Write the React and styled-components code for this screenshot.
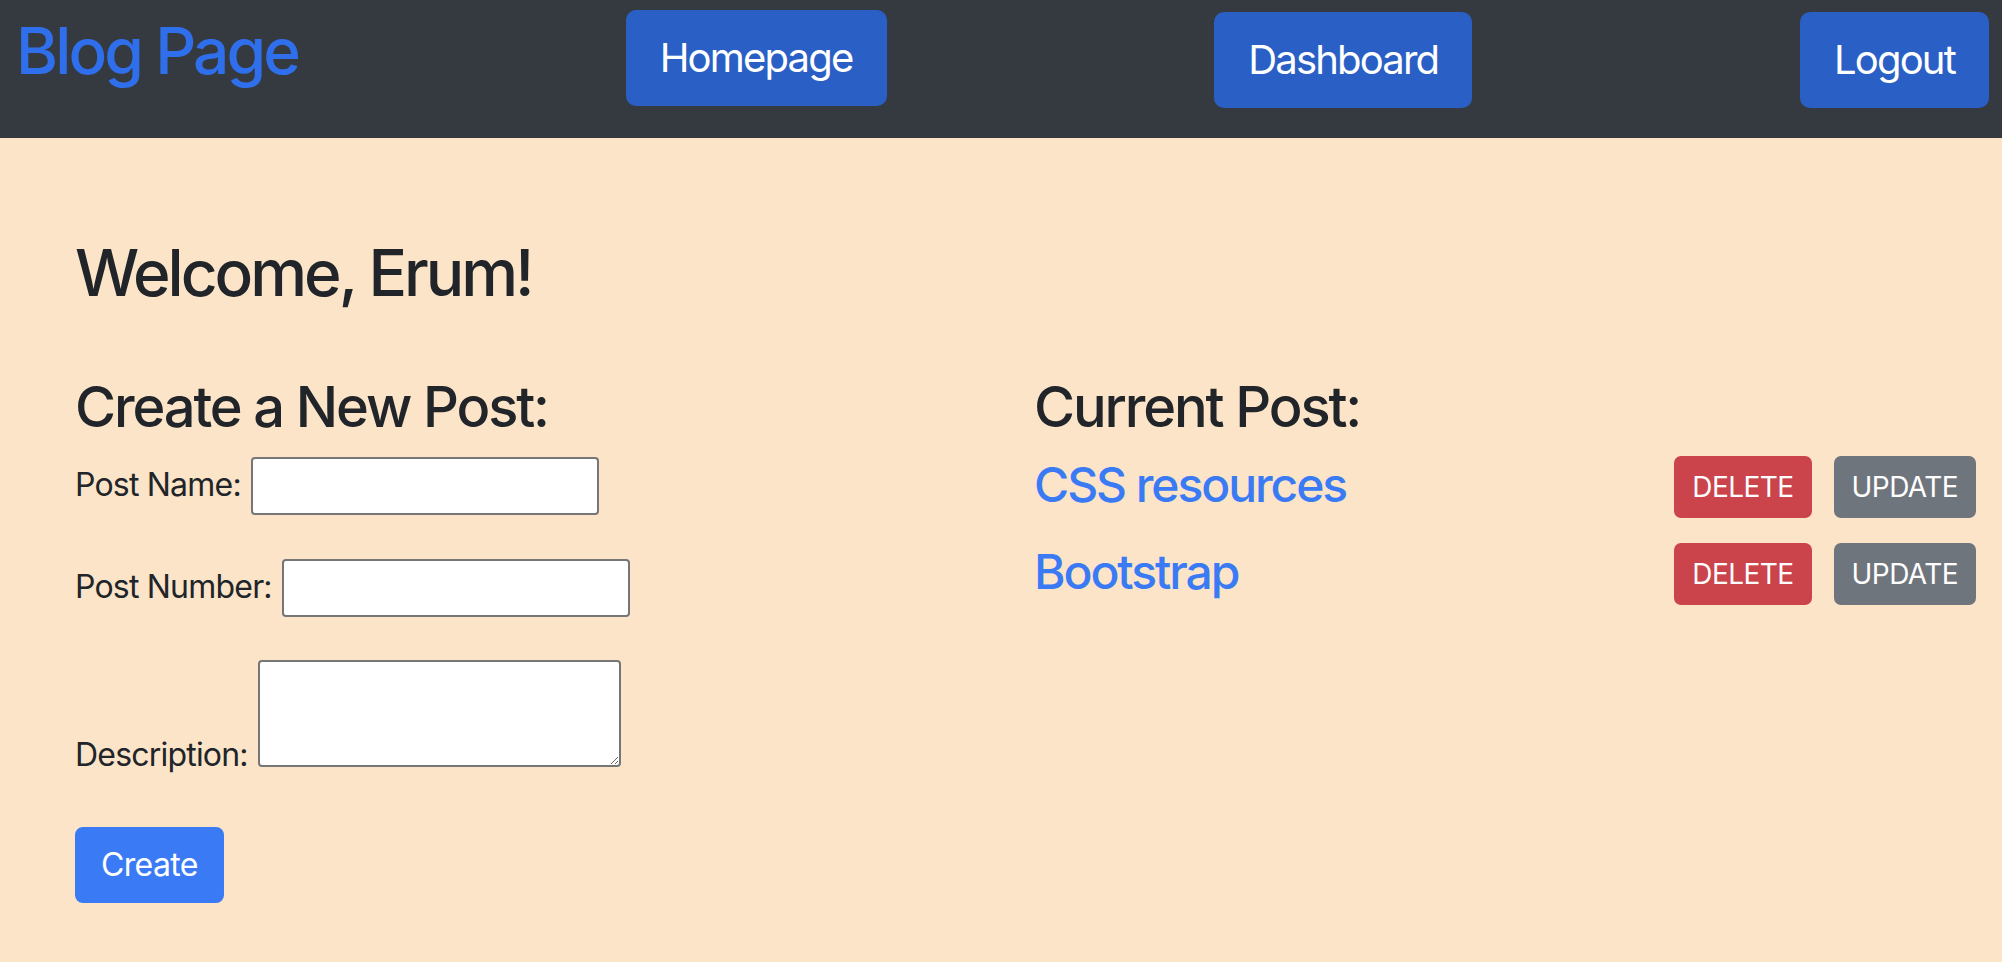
import React from "react";
import styled, { createGlobalStyle } from "styled-components";

const GlobalStyle = createGlobalStyle`
  html, body {
    margin: 0;
    padding: 0;
  }
  body {
    font-family: Inter, "Noto Sans", sans-serif;
    background: #fbe4c8;
    color: #212529;
  }
`;

const Page = styled.div`
  min-height: 100vh;
  background: #fbe4c8;
`;

// Top bar
const Navbar = styled.nav`
  display: flex;
  justify-content: space-between;
  align-items: flex-start;
  height: 138px;
  box-sizing: border-box;
  padding: 0 13px 0 16px;
  background: #353a40;
`;

const Brand = styled.a`
  margin-top: 13px;
  font-size: 64px;
  font-weight: 450;
  line-height: 1.2;
  letter-spacing: -0.045em;
  color: #2f6fec;
  text-decoration: none;
`;

const NavButton = styled.button`
  margin-top: ${(p) => p.$top}px;
  padding: 16px 32px;
  font-family: inherit;
  font-size: 40px;
  line-height: 60px;
  letter-spacing: -0.045em;
  color: #fff;
  background: #2a60c5;
  border: 2px solid #2a60c5;
  border-radius: 10px;
  cursor: pointer;
`;

// Content
const Main = styled.main`
  padding: 97px 26px 0 75px;
`;

const Welcome = styled.h2`
  margin: 0;
  font-size: 64px;
  font-weight: 500;
  line-height: 1.2;
  letter-spacing: -0.047em;
`;

const Columns = styled.div`
  display: grid;
  grid-template-columns: 959px 1fr;
  margin-top: 62px;
`;

const SectionTitle = styled.h3`
  margin: 0;
  font-size: 56px;
  font-weight: 500;
  line-height: 1.2;
  letter-spacing: -0.038em;
`;

const Form = styled.form`
  display: flex;
  flex-direction: column;
  align-items: flex-start;
`;

const Field = styled.div`
  display: flex;
  align-items: flex-end;
  gap: 10px;
  margin-top: ${(p) => p.$gap}px;
`;

const Label = styled.label`
  font-size: 32px;
  line-height: 48px;
  letter-spacing: -0.025em;
  margin-bottom: ${(p) => p.$baseline - 12}px;
`;

const TextInput = styled.input`
  width: 348px;
  height: 58px;
  box-sizing: border-box;
  padding: 2px 4px;
  font-size: 26px;
  background: #fff;
  border: 2px solid #767676;
  border-radius: 4px;
  outline: none;
`;

const TextArea = styled.textarea`
  width: 363px;
  height: 107px;
  box-sizing: border-box;
  padding: 2px 4px;
  font-size: 26px;
  background: #fff;
  border: 2px solid #767676;
  border-radius: 4px;
  outline: none;
`;

const CreateButton = styled.button`
  margin-top: 60px;
  padding: 12px 24px;
  font-family: inherit;
  font-size: 32px;
  line-height: 48px;
  letter-spacing: -0.02em;
  color: #fff;
  background: #3a7bf5;
  border: 2px solid #3a7bf5;
  border-radius: 8px;
  cursor: pointer;
`;

const PostList = styled.div`
  display: flex;
  flex-direction: column;
  gap: 25px;
  margin-top: 15px;
`;

const PostRow = styled.div`
  display: flex;
  justify-content: space-between;
  align-items: flex-start;
`;

const PostLink = styled.a`
  font-size: 48px;
  font-weight: 500;
  line-height: 1.2;
  letter-spacing: -0.043em;
  color: #3a7bf5;
  text-decoration: none;
`;

const Actions = styled.div`
  display: flex;
  gap: 22px;
`;

const SmallButton = styled.button`
  padding: 8px 16px;
  font-family: inherit;
  font-size: 28px;
  line-height: 42px;
  letter-spacing: -0.02em;
  text-transform: uppercase;
  color: #fff;
  background: ${(p) => (p.$variant === "danger" ? "#cb444c" : "#6f757d")};
  border: 2px solid ${(p) => (p.$variant === "danger" ? "#cb444c" : "#6f757d")};
  border-radius: 7px;
  cursor: pointer;
`;

const posts = [
  { id: 1, name: "CSS resources" },
  { id: 2, name: "Bootstrap" },
];

export default function App() {
  return (
    <Page>
      <GlobalStyle />
      <Navbar>
        <Brand href="#">Blog Page</Brand>
        <NavButton $top={10}>Homepage</NavButton>
        <NavButton $top={12}>Dashboard</NavButton>
        <NavButton $top={12}>Logout</NavButton>
      </Navbar>

      <Main>
        <Welcome>Welcome, Erum!</Welcome>
        <Columns>
          <div>
            <SectionTitle>Create a New Post:</SectionTitle>
            <Form onSubmit={(e) => e.preventDefault()}>
              <Field $gap={16}>
                <Label $baseline={18}>Post Name:</Label>
                <TextInput type="text" />
              </Field>
              <Field $gap={44}>
                <Label $baseline={18}>Post Number:</Label>
                <TextInput type="text" />
              </Field>
              <Field $gap={43}>
                <Label $baseline={0}>Description:</Label>
                <TextArea />
              </Field>
              <CreateButton type="submit">Create</CreateButton>
            </Form>
          </div>
          <div>
            <SectionTitle>Current Post:</SectionTitle>
            <PostList>
              {posts.map((post) => (
                <PostRow key={post.id}>
                  <PostLink href="#">{post.name}</PostLink>
                  <Actions>
                    <SmallButton $variant="danger">Delete</SmallButton>
                    <SmallButton $variant="secondary">Update</SmallButton>
                  </Actions>
                </PostRow>
              ))}
            </PostList>
          </div>
        </Columns>
      </Main>
    </Page>
  );
}
